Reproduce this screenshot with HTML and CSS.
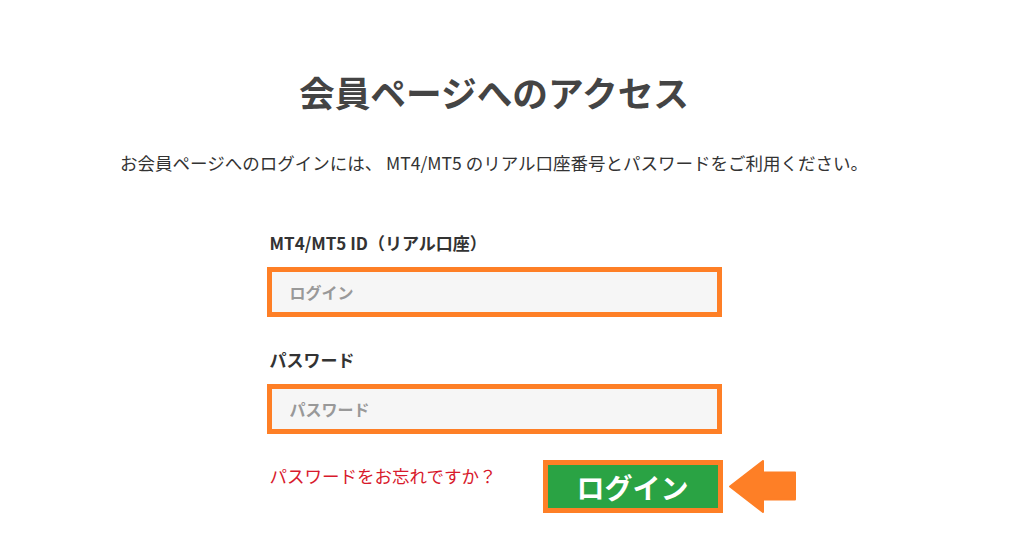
FILE: index.html
```html
<!DOCTYPE html>
<html lang="ja">
<head>
  <meta charset="UTF-8" />
  <meta name="viewport" content="width=device-width, initial-scale=1.0"/>
  <title>会員ページへのアクセス</title>
  <link rel="stylesheet" href="styles.css">
</head>
<body>
  <div class="page">
    <h1>会員ページへのアクセス</h1>
    <p class="lead">お会員ページへのログインには、 MT4/MT5 のリアル口座番号とパスワードをご利用ください。</p>

    <form class="login" onsubmit="return false">
      <label for="login">MT4/MT5 ID（リアル口座）</label>
      <input type="text" id="login" placeholder="ログイン" />

      <label for="password" class="second">パスワード</label>
      <input type="password" id="password" placeholder="パスワード" />

      <div class="actions">
        <a href="#" class="forgot">パスワードをお忘れですか？</a>
        <div class="submit-wrap">
          <button type="submit">ログイン</button>
          <svg class="arrow" width="68" height="53" viewBox="0 0 68 53">
            <polygon points="1,26.5 34,1 34,12.5 66,12.5 66,39.5 34,39.5 34,52" fill="#fe7f26" stroke="#fe7f26" stroke-width="2" stroke-linejoin="round"/>
          </svg>
        </div>
      </div>
    </form>
  </div>
</body>
</html>
```

FILE: styles.css
```css
body {
  margin: 0;
  background: #ffffff;
  font-family: "Noto Sans CJK JP", "Noto Sans", sans-serif;
  color: #333333;
}

.page {
  width: 988px;
  padding-top: 71px;
  text-align: center;
}

h1 {
  margin: 0;
  font-size: 35.7px;
  line-height: 42px;
  font-weight: bold;
  color: #444444;
}

.lead {
  margin: 38px 0 0;
  font-size: 17.5px;
  line-height: 24px;
  color: #333333;
}

.login {
  width: 455px;
  margin: 56px auto 0;
  text-align: left;
}

.login label {
  display: block;
  padding-left: 3px;
  font-size: 17px;
  line-height: 24px;
  font-weight: bold;
  color: #333333;
}

.login label.second {
  margin-top: 31px;
}

.login input {
  display: block;
  box-sizing: border-box;
  width: 455px;
  height: 50px;
  margin-top: 12px;
  padding: 0 18px;
  border: 5px solid #fe7f26;
  background: #f6f6f6;
  font-family: inherit;
  font-size: 16px;
  font-weight: bold;
  color: #333333;
  outline: none;
}

.login input::placeholder {
  color: #999999;
}

.actions {
  display: flex;
  justify-content: space-between;
  align-items: flex-start;
  margin-top: 26px;
}

.forgot {
  margin-top: 4px;
  padding-left: 3px;
  font-size: 17.5px;
  line-height: 24px;
  color: #d8192c;
  text-decoration: none;
}

.submit-wrap {
  position: relative;
  margin-right: -1px;
}

button {
  display: block;
  box-sizing: border-box;
  width: 180px;
  height: 53px;
  border: 5px solid #fe7f26;
  background: #2aa344;
  color: #ffffff;
  font-family: inherit;
  font-size: 28px;
  font-weight: bold;
  line-height: 1;
  cursor: pointer;
}

.arrow {
  position: absolute;
  left: 186px;
  top: 0;
}
```
